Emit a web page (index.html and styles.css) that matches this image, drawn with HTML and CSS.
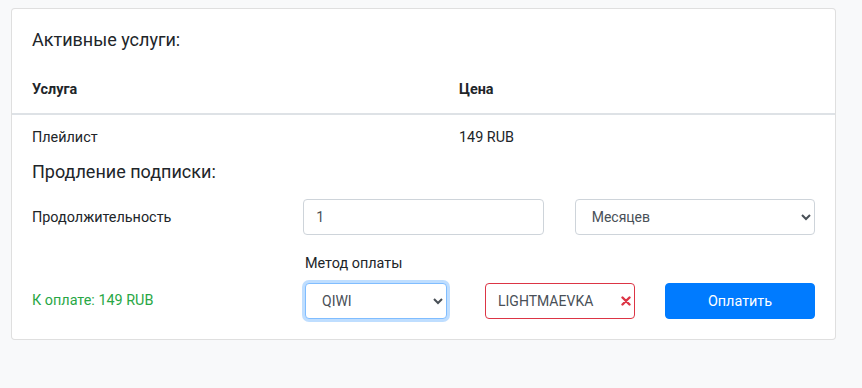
FILE: index.html
```html
<!DOCTYPE html>
<html>
<head>
    <title>Услуги</title>
    <link rel="stylesheet" href="styles.css">
</head>
<body>
    <div class="card">
        <h5 class="card-title">Активные услуги:</h5>
        <table class="services">
            <thead>
                <tr>
                    <th class="col-name">Услуга</th>
                    <th>Цена</th>
                </tr>
            </thead>
            <tbody>
                <tr>
                    <td>Плейлист</td>
                    <td>149 RUB</td>
                </tr>
            </tbody>
        </table>

        <div class="card-body">
            <h5 class="section-title">Продление подписки:</h5>

            <div class="duration-row">
                <label class="row-label" for="months">Продолжительность</label>
                <input type="text" id="months" class="form-control" value="1" />
                <select class="form-control custom-select">
                    <option>Месяцев</option>
                    <option>Дней</option>
                </select>
            </div>

            <div class="pay-row">
                <div class="total">К оплате: 149 RUB</div>
                <div class="method">
                    <label class="method-label" for="method">Метод оплаты</label>
                    <select id="method" class="form-control custom-select focused">
                        <option>QIWI</option>
                        <option>Карта</option>
                    </select>
                </div>
                <div class="promo">
                    <input type="text" class="form-control is-invalid" value="LIGHTMAEVKA" />
                    <svg class="invalid-icon" width="10" height="10" viewBox="0 0 10 10">
                        <path d="M1.5 1.5 L8.5 8.5 M8.5 1.5 L1.5 8.5" stroke="#dc3545" stroke-width="2.4" stroke-linecap="round" fill="none" />
                    </svg>
                </div>
                <button class="btn-pay">Оплатить</button>
            </div>
        </div>
    </div>
</body>
</html>
```

FILE: styles.css
```css
body {
    margin: 0;
    background-color: #f8f9fa;
    font-family: Roboto, "Liberation Sans", sans-serif;
    font-size: 14.4px;
    line-height: 1.5;
    color: #212529;
}

.card {
    margin: 8px 0 0 11px;
    width: 823px;
    background-color: #fff;
    border: 1px solid rgba(0, 0, 0, 0.125);
    border-radius: 4px;
}

.card-title,
.section-title {
    margin: 0;
    font-size: 18px;
    font-weight: 400;
    line-height: 1.2;
}

.card-title {
    padding: 20px 20px 0;
}

.services {
    width: 100%;
    border-collapse: collapse;
    margin-top: 16px;
}

.services th,
.services td {
    text-align: left;
    padding: 12px 20px 13px;
}

.services th {
    font-weight: 700;
    padding-bottom: 12.5px;
    border-bottom: 2px solid #dee2e6;
}

.services .col-name {
    width: 387px;
}

.card-body {
    padding: 0 20px 20px;
}

.form-control {
    box-sizing: border-box;
    height: 36px;
    padding: 6px 12px;
    font-family: inherit;
    font-size: 14px;
    color: #495057;
    background-color: #fff;
    border: 1px solid #ced4da;
    border-radius: 4px;
    outline: none;
}

.duration-row {
    display: grid;
    grid-template-columns: repeat(3, 1fr);
    column-gap: 31px;
    align-items: center;
    margin-top: 16.5px;
}

.duration-row .form-control {
    width: 100%;
}

.pay-row {
    display: grid;
    grid-template-columns: 273px 180px 180px 150px;
    align-items: end;
    margin-top: 18px;
}

.total {
    color: #28a745;
    line-height: 36px;
}

.method-label {
    display: block;
    margin-bottom: 8px;
}

.method .form-control {
    display: block;
    width: 142px;
}

.focused {
    border-color: #80bdff;
    box-shadow: 0 0 0 3px rgba(0, 123, 255, 0.25);
}

.promo {
    position: relative;
    width: 150px;
}

.promo .form-control {
    display: block;
    width: 100%;
    padding-right: 28px;
}

.is-invalid {
    border-color: #dc3545;
}

.invalid-icon {
    position: absolute;
    right: 4px;
    top: 13px;
}

.btn-pay {
    display: block;
    height: 36px;
    width: 150px;
    font-family: inherit;
    font-size: 14.4px;
    color: #fff;
    background-color: #007bff;
    border: 1px solid #007bff;
    border-radius: 4px;
    cursor: pointer;
}
```
